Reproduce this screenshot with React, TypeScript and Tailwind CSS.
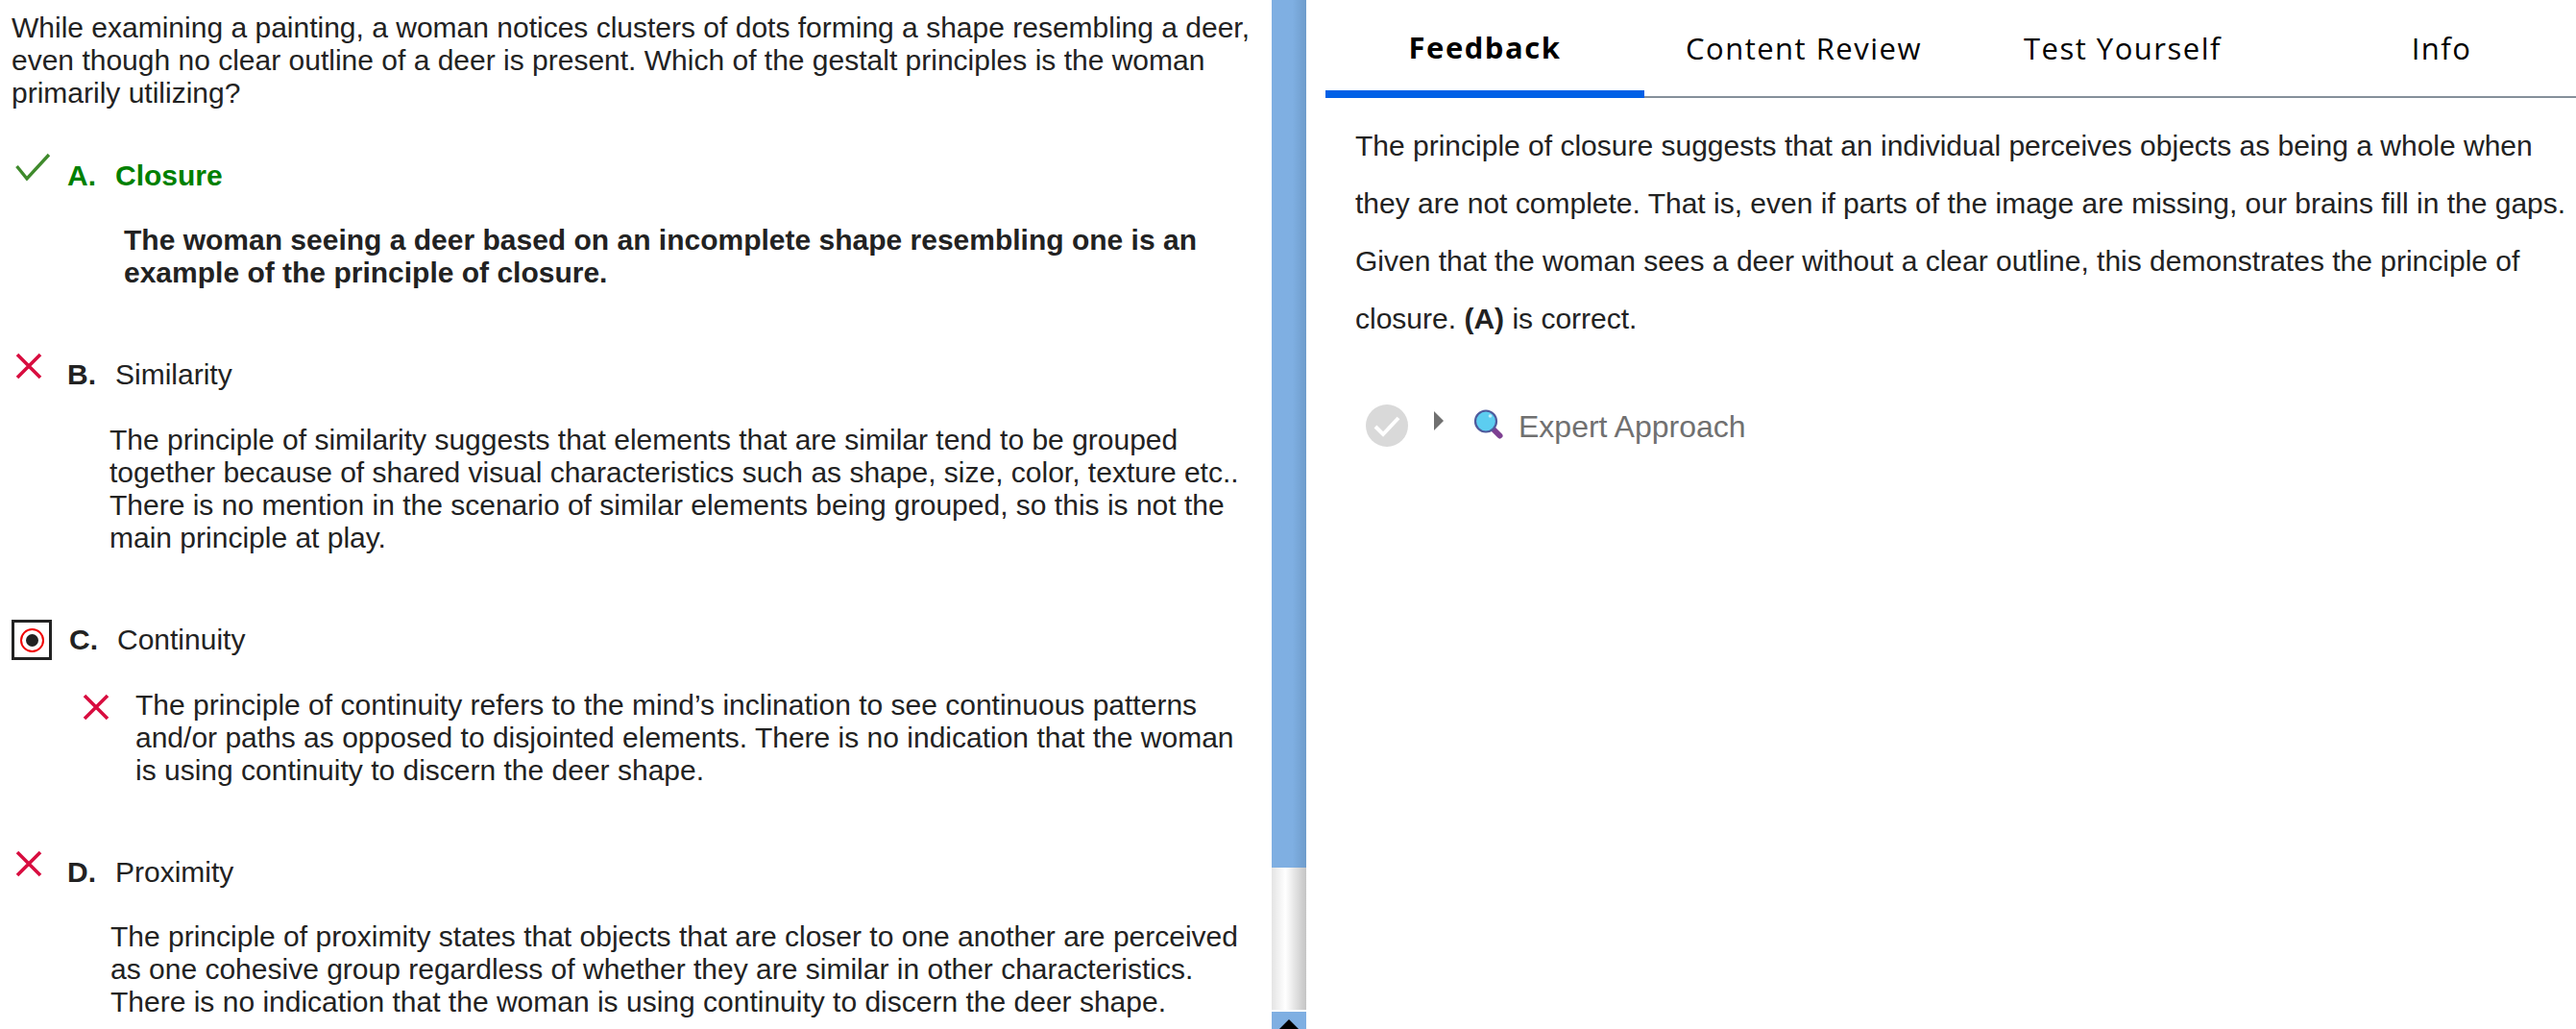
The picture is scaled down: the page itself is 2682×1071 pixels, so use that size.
import React from "react";

const CrossIcon = ({ className }: { className?: string }) => (
    <svg viewBox="0 0 28 28" className={className} fill="none">
        <path d="M2 2 L26 26 M26 2 L2 26" stroke="#d80d3f" strokeWidth="3.6" />
    </svg>
);

const CheckIcon = () => (
    <svg viewBox="0 0 36 36" className="w-[36px] h-[36px]" fill="none">
        <path d="M1.5 16 L12 29 L35 4" stroke="#3f8a2c" strokeWidth="3.4" />
    </svg>
);

const RadioBox = () => (
    <div className="w-[42px] h-[42px] border-[3px] border-[#222] flex items-center justify-center shrink-0">
        <div className="w-[25px] h-[25px] rounded-full border-[2px] border-[#f00000] flex items-center justify-center">
            <div className="w-[13px] h-[13px] rounded-full bg-[#222]" />
        </div>
    </div>
);

const Magnifier = () => (
    <svg viewBox="0 0 32 32" className="w-[32px] h-[32px]">
        <path d="M20 20 L27.5 27.5" stroke="#7d3f91" strokeWidth="6" strokeLinecap="round" />
        <circle cx="13" cy="12.5" r="11" fill="#5ccdf0" stroke="#4f5a9c" strokeWidth="2.2" />
        <circle cx="17.5" cy="7" r="1.8" fill="#c4eefa" />
    </svg>
);

const ApproachCheck = () => (
    <div className="w-[44px] h-[44px] rounded-full bg-[#d9d9d9] flex items-center justify-center">
        <svg viewBox="0 0 30 24" className="w-[30px] h-[24px]" fill="none">
            <path d="M3 13 L11 21 L27 4" stroke="#fff" strokeWidth="4" />
        </svg>
    </div>
);

const tabs = ["Feedback", "Content Review", "Test Yourself", "Info"];

export default function App() {
    return (
        <div className="flex w-[2682px] h-[1071px] overflow-hidden bg-white text-[#222] font-['Liberation_Sans',Arial,sans-serif] text-[30px] leading-[34px]">
            {/* Question pane */}
            <div className="w-[1324px] shrink-0 pt-[12px]">
                <p className="pl-[12px] whitespace-nowrap">
                    While examining a painting, a woman notices clusters of dots forming a shape resembling a deer,<br />
                    even though no clear outline of a deer is present. Which of the gestalt principles is the woman<br />
                    primarily utilizing?
                </p>

                {/* A */}
                <div className="mt-[52px] flex h-[34px] pl-[16px]">
                    <div className="w-[54px] -mt-[9px]"><CheckIcon /></div>
                    <span className="w-[50px] font-bold text-[#008000]">A.</span>
                    <span className="font-bold text-[#008000]">Closure</span>
                </div>
                <p className="mt-[33px] pl-[129px] font-bold whitespace-nowrap">
                    The woman seeing a deer based on an incomplete shape resembling one is an<br />
                    example of the principle of closure.
                </p>

                {/* B */}
                <div className="mt-[72px] flex h-[34px] pl-[16px]">
                    <div className="w-[54px] -mt-[6px]"><CrossIcon className="w-[28px] h-[28px]" /></div>
                    <span className="w-[50px] font-bold">B.</span>
                    <span>Similarity</span>
                </div>
                <p className="mt-[34px] pl-[114px] whitespace-nowrap">
                    The principle of similarity suggests that elements that are similar tend to be grouped<br />
                    together because of shared visual characteristics such as shape, size, color, texture etc..<br />
                    There is no mention in the scenario of similar elements being grouped, so this is not the<br />
                    main principle at play.
                </p>

                {/* C */}
                <div className="mt-[72px] flex h-[34px] pl-[12px] items-center">
                    <RadioBox />
                    <span className="ml-[18px] w-[50px] font-bold">C.</span>
                    <span>Continuity</span>
                </div>
                <div className="mt-[34px] flex pl-[86px]">
                    <div className="w-[55px] pt-[5px] shrink-0"><CrossIcon className="w-[28px] h-[28px]" /></div>
                    <p className="whitespace-nowrap">
                        The principle of continuity refers to the mind’s inclination to see continuous patterns<br />
                        and/or paths as opposed to disjointed elements. There is no indication that the woman<br />
                        is using continuity to discern the deer shape.
                    </p>
                </div>

                {/* D */}
                <div className="mt-[72px] flex h-[34px] pl-[16px]">
                    <div className="w-[54px] -mt-[6px]"><CrossIcon className="w-[28px] h-[28px]" /></div>
                    <span className="w-[50px] font-bold">D.</span>
                    <span>Proximity</span>
                </div>
                <p className="mt-[33px] pl-[115px] whitespace-nowrap">
                    The principle of proximity states that objects that are closer to one another are perceived<br />
                    as one cohesive group regardless of whether they are similar in other characteristics.<br />
                    There is no indication that the woman is using continuity to discern the deer shape.
                </p>
            </div>

            {/* Scrollbar */}
            <div className="w-[36px] shrink-0 flex flex-col">
                <div className="h-[905px] bg-gradient-to-r from-[#7fafe2] from-60% to-[#6f9ccb]" />
                <div className="h-[148px] bg-gradient-to-r from-[#e4e4e4] via-white via-40% to-[#c4c4c4]" />
                <div className="h-[2px] bg-white" />
                <div className="flex-1 bg-[#7fafe2] flex justify-center pt-[8px]">
                    <div className="w-0 h-0 border-x-[10px] border-x-transparent border-b-[10px] border-b-black" />
                </div>
            </div>

            {/* Feedback pane */}
            <div className="flex-1 min-w-0 pl-[20px]">
                <div className="flex h-[102px] border-b-2 border-[#85909a] font-['Open_Sans',sans-serif] text-[31px] tracking-[1.5px] text-black">
                    {tabs.map((tab, i) => (
                        <div
                            key={tab}
                            className={
                                i === 0
                                    ? "w-[332px] shrink-0 flex items-center justify-center font-bold h-[102px] border-b-[8px] border-[#0060e6] pt-[4px]"
                                    : "w-[332px] shrink-0 flex items-center justify-center h-[100px]"
                            }
                        >
                            {tab}
                        </div>
                    ))}
                </div>
                <p className="mt-[20px] pl-[31px] leading-[60px] whitespace-nowrap">
                    The principle of closure suggests that an individual perceives objects as being a whole when<br />
                    they are not complete. That is, even if parts of the image are missing, our brains fill in the gaps.<br />
                    Given that the woman sees a deer without a clear outline, this demonstrates the principle of<br />
                    closure. <b>(A)</b> is correct.
                </p>
                <div className="mt-[59px] pl-[42px] flex items-center h-[44px] text-[#707070] text-[32px]">
                    <ApproachCheck />
                    <div className="ml-[27px] -mt-[10px] w-0 h-0 border-y-[10px] border-y-transparent border-l-[10px] border-l-[#707070]" />
                    <div className="ml-[31px] -mt-[2px]"><Magnifier /></div>
                    <span className="ml-[15px] mt-[2px]">Expert Approach</span>
                </div>
            </div>
        </div>
    );
}
